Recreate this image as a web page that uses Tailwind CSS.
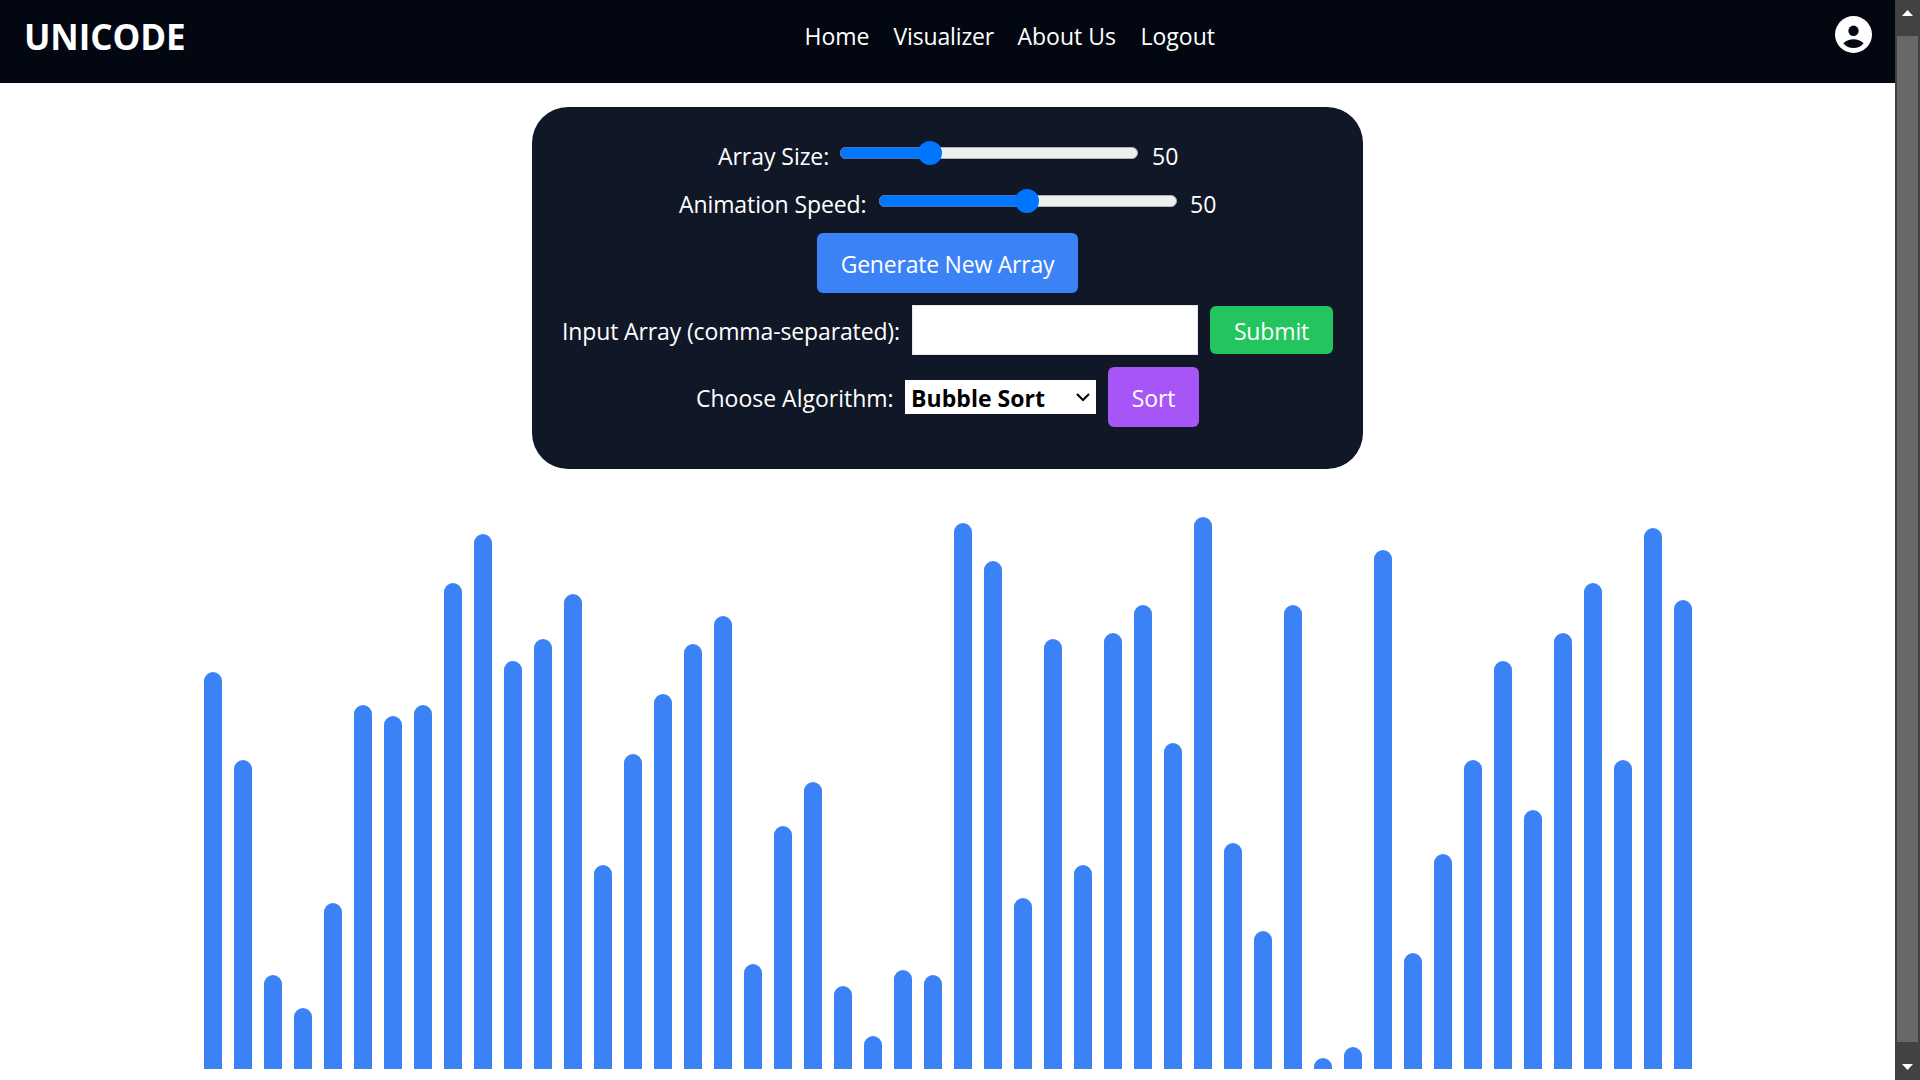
<!DOCTYPE html>
<html lang="en">
<head>
<meta charset="utf-8">
<title>Unicode Visualizer</title>
<script src="https://cdn.jsdelivr.net/npm/@tailwindcss/browser@4"></script>
</head>
<body class="flex h-[1080px] w-[1920px] overflow-hidden bg-white font-['Open_Sans',sans-serif] text-[23px] leading-[38px] text-white">
<div class="flex w-[1895px] flex-col">
  <header class="flex h-[83px] shrink-0 items-start justify-between bg-[#030712] pl-6 pr-[23px]">
    <h1 class="mt-[15px] w-[180px] text-[35px] leading-[44px] font-bold tracking-[-0.1px]">UNICODE</h1>
    <nav class="mt-[17px] ml-[124px] flex h-9 gap-6 whitespace-nowrap">
      <a class="w-[65px]">Home</a>
      <a class="w-[100px] tracking-[-0.15px]">Visualizer</a>
      <a class="w-[99px]">About Us</a>
      <a class="w-[75px]">Logout</a>
    </nav>
    <div class="mt-4 flex w-[180px] justify-end">
      <svg class="size-[37px]" viewBox="2 2 20 20" fill="none"><circle cx="12" cy="12" r="10" fill="#fff"/><circle cx="12" cy="10" r="2.8" fill="#030712"/><path d="M6.5 16.7C8 15.2 10 14.5 12 14.5s4 .7 5.5 2.2C16 18.5 14.1 19.3 12 19.3s-4-.8-5.5-2.6z" fill="#030712"/></svg>
    </div>
  </header>

  <main class="flex flex-1 flex-col items-center pt-6">
    <section class="flex h-[362px] w-[831px] shrink-0 flex-col items-center gap-3 rounded-[36px] bg-gray-900 pt-[30px] whitespace-nowrap">
      <div class="flex h-9">
        <label class="w-[111px] pl-px tracking-[-0.05px]">Array Size:</label>
        <div class="ml-3 mt-1 flex h-6 w-[298px] items-center">
          <div class="relative h-3 w-full rounded-full border border-[#b2b2b2] bg-[#efefef]">
            <div class="absolute -top-px -left-px h-3 w-[91px] rounded-l-full border border-r-0 border-[#3f75b5] bg-[#0075ff]"></div>
            <div class="absolute -top-[7px] left-[77px] size-6 rounded-full bg-[#0075ff]"></div>
          </div>
        </div>
        <span class="ml-[13px] w-[27px] pl-px">50</span>
      </div>
      <div class="flex h-9">
        <label class="w-[189px] pl-px tracking-[-0.1px]">Animation Speed:</label>
        <div class="ml-3 mt-1 flex h-6 w-[298px] items-center">
          <div class="relative h-3 w-full rounded-full border border-[#b2b2b2] bg-[#efefef]">
            <div class="absolute -top-px -left-px h-3 w-[149px] rounded-l-full border border-r-0 border-[#3f75b5] bg-[#0075ff]"></div>
            <div class="absolute -top-[7px] left-[135px] size-6 rounded-full bg-[#0075ff]"></div>
          </div>
        </div>
        <span class="ml-[13px] w-[27px]">50</span>
      </div>
      <button class="flex h-[60px] w-[261px] justify-center rounded-md bg-[#3b82f6] pt-3 tracking-[-0.22px]">Generate New Array</button>
      <div class="flex h-[50px] items-center gap-3">
        <label class="h-9 w-[338px] tracking-[-0.13px]">Input Array (comma-separated):</label>
        <input type="text" class="h-[50px] w-[286px] border border-gray-200 bg-white px-3 text-black">
        <button class="flex h-12 w-[123px] justify-center rounded-md bg-[#22c55e] pt-1.5 tracking-[-0.15px]">Submit</button>
      </div>
      <div class="flex h-[60px] items-center gap-3 pr-px">
        <label class="h-9 w-[198px] pl-px">Choose Algorithm:</label>
        <div class="flex h-[34px] w-[191px] items-center justify-between bg-white pr-[6px] pl-[6px] text-black">
          <span class="h-9 font-bold tracking-[0.05px]">Bubble Sort</span>
          <svg class="h-[9px] w-[14px]" viewBox="0 0 14 9" fill="none" stroke="#000" stroke-width="2"><path d="M1 1l6 6 6-6"/></svg>
        </div>
        <button class="flex h-[60px] w-[91px] justify-center rounded-md bg-[#a855f7] pt-3 tracking-[-0.15px]">Sort</button>
      </div>
    </section>
    <section id="bars" class="mt-12 flex h-[552px] w-[1488px] items-end gap-3"></section>
  </main>
</div>

<aside class="flex w-[25px] flex-col items-center justify-between bg-[#424242]">
  <div class="flex h-9 w-full justify-center pt-[10px]"><svg class="h-[6px] w-[11px]" viewBox="0 0 11 6" fill="#fff"><path d="M5.5 0L11 6H0z"/></svg></div>
  <div class="w-[21px] flex-1 bg-[#686868]"></div>
  <div class="flex h-[38px] w-full justify-center pt-[22px]"><svg class="h-[6px] w-[11px]" viewBox="0 0 11 6" fill="#fff"><path d="M0 0h11L5.5 6z"/></svg></div>
</aside>

<script>
const values = [72,56,17,11,30,66,64,66,88,97,74,78,86,37,57,68,77,82,19,44,52,15,6,18,17,99,92,31,78,37,79,84,59,100,41,25,84,2,4,94,21,39,56,74,47,79,88,56,98,85];
document.getElementById('bars').innerHTML = values.map(v =>
  `<div class="w-[18px] shrink-0 rounded-t-xl bg-[#3b82f6]" style="height:${Math.round(v * 5.519)}px"></div>`).join('');
</script>
</body>
</html>
